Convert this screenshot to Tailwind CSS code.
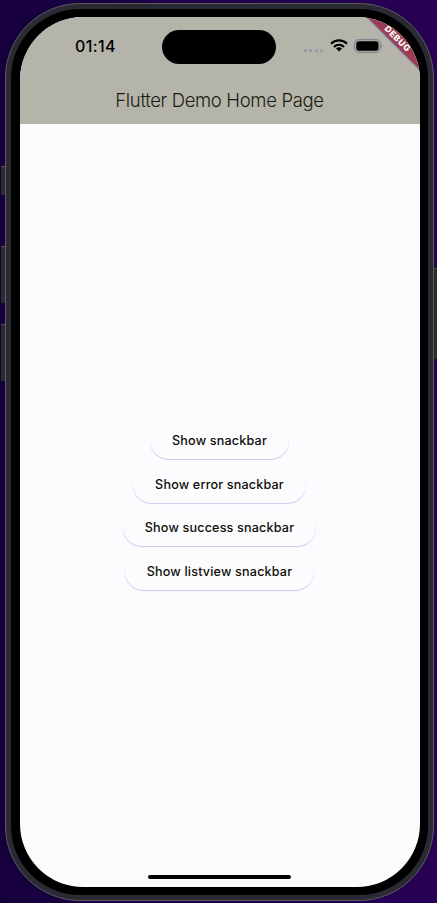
<!DOCTYPE html>
<html lang="en">
<head>
<meta charset="utf-8">
<title>Flutter Demo</title>
<script src="https://cdn.jsdelivr.net/npm/@tailwindcss/browser@4"></script>
</head>
<body class="relative w-[437px] h-[903px] overflow-hidden bg-[#22004e] bg-linear-to-r from-[#16003c] via-[#1f004c] to-[#270056] font-['Inter',sans-serif] pt-[3px] pl-[5px]">
  <!-- side keys -->
  <div class="absolute left-[1px] top-[166px] w-[8px] h-[29px] bg-[#2b2b30] border-t border-[#55555a]"></div>
  <div class="absolute left-[1px] top-[246px] w-[8px] h-[57px] bg-[#2b2b30] border-t border-[#55555a]"></div>
  <div class="absolute left-[1px] top-[324px] w-[8px] h-[57px] bg-[#2b2b30] border-t border-[#55555a]"></div>
  <div class="absolute left-[430px] top-[268px] w-[7px] h-[91px] bg-[#2b2b28] border-t border-[#4a4a40]"></div>

  <div class="relative w-[429px] h-[898px] rounded-[75px] bg-[#2a2a34] border border-[#5c5c58] p-[5px]">
    <div class="w-full h-full rounded-[69px] bg-black pt-[8px] pl-[8.5px]">
      <main class="relative w-[400px] h-[870px] rounded-[63px] overflow-hidden bg-[#fcfcff] flex flex-col">
        <header class="h-[107px] shrink-0 bg-[#b4b4aa] flex flex-col">
          <div class="relative h-[59px] flex items-center">
            <span class="ml-[55.5px] w-[42px] text-[16px] leading-none font-medium text-black tracking-[0.4px] -mt-px">01:14</span>
            <div class="ml-[44.500px] w-[114px] h-[34px] rounded-full bg-black"></div>
            <div class="ml-[28px] mt-[8px] flex gap-[2.500px]">
              <i class="size-[3px] rounded-full bg-[#9494ac]"></i><i class="size-[3px] rounded-full bg-[#9494ac]"></i><i class="size-[3px] rounded-full bg-[#9494ac]"></i><i class="size-[3px] rounded-full bg-[#9494ac]"></i>
            </div>
            <svg class="ml-[7px] -mt-[2px] w-[18px] h-[13px]" viewBox="0 0 18 13" fill="none" stroke="#000" stroke-width="2.1"><path d="M1 4.8C5.5.2 12.500 .2 17 4.800M4 7.900C6.900 5 11.100 5 14 7.900"/><path d="M9 12.500 6 9.500C7.800 7.900 10.200 7.900 12 9.500Z" fill="#000" stroke="none"/></svg>
            <svg class="ml-[6px] -mt-[2px] w-[28px] h-[14px]" viewBox="0 0 28 14"><rect x=".7" y=".7" width="25.500" height="12.600" rx="4.200" fill="none" stroke="#83838f" stroke-width="1.200"/><rect x="2.300" y="2.300" width="22.200" height="9.400" rx="2.800"/><path d="M27 5v4c1.300-.8 1.300-3.200 0-4Z" fill="#83838a"/></svg>
          </div>
          <h1 class="h-[48px] pt-[15px] text-center text-[18.5px] leading-[18px] font-light tracking-[-0.34px] text-[#1c1c0e] whitespace-nowrap">Flutter Demo Home Page</h1>
        </header>
        <section class="grow flex flex-col items-center pt-[298px] gap-[6.7px] text-[12.6px] font-medium tracking-[0.17px] text-[#0e0e06]">
          <button class="w-[139px] h-[37px] pt-[2px] rounded-full bg-[#fcfcff] shadow-[0_1px_1px_#c9c9ee]">Show snackbar</button>
          <button class="w-[173px] h-[37px] pt-[2px] rounded-full bg-[#fcfcff] shadow-[0_1px_1px_#c9c9ee]">Show error snackbar</button>
          <button class="w-[193px] h-[37px] pt-[2px] rounded-full bg-[#fcfcff] shadow-[0_1px_1px_#c9c9ee]">Show success snackbar</button>
          <button class="w-[189px] h-[37px] pt-[2px] rounded-full bg-[#fcfcff] shadow-[0_1px_1px_#c9c9ee]">Show listview snackbar</button>
        </section>
        <div class="w-[143px] h-[4px] mb-[8px] self-center rounded-full bg-black"></div>
        <!-- corner banner -->
        <div class="absolute left-[318.5px] top-[15px] w-[120px] h-[13px] rotate-45 bg-[#9e3c54] shadow-[0_1px_1px_#7c80ac] pt-px flex items-center justify-center text-[8.600px] leading-none font-extrabold tracking-[0.6px] text-white">DEBUG</div>
      </main>
    </div>
  </div>
</body>
</html>
